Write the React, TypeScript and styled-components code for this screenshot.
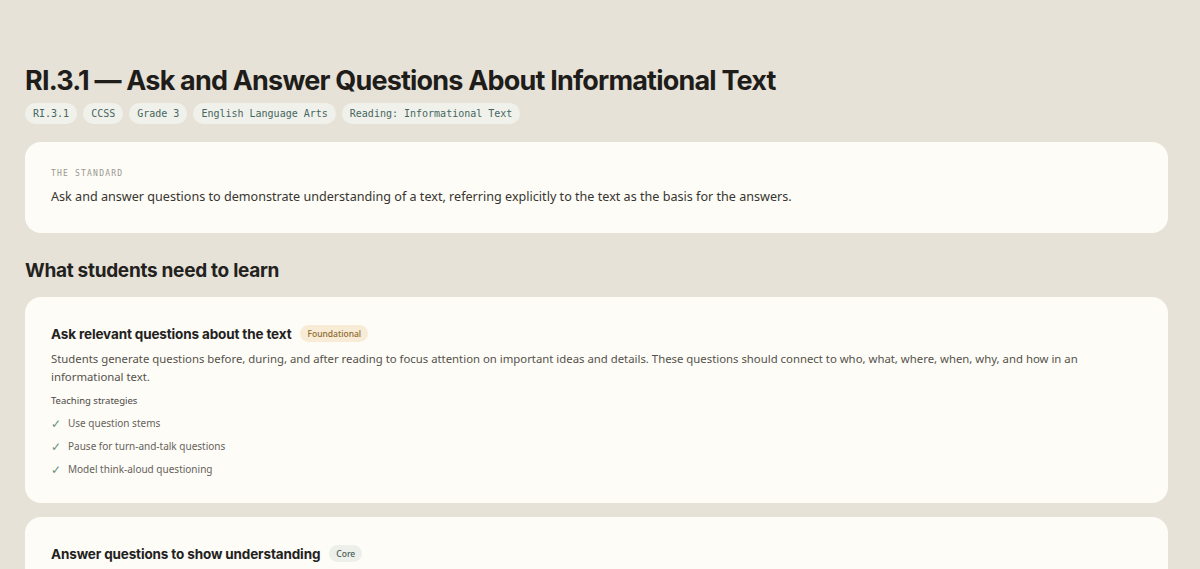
import React from 'react';
import styled, { createGlobalStyle } from 'styled-components';

const GlobalStyle = createGlobalStyle`
    html, body {
        margin: 0;
        padding: 0;
        background: #e6e2d8;
    }
    body {
        font-family: 'Noto Sans', 'Open Sans', sans-serif;
        color: #2a2824;
    }
    ::-webkit-scrollbar {
        width: 8px;
    }
    ::-webkit-scrollbar-track {
        background: #e6e2d8;
    }
    ::-webkit-scrollbar-thumb {
        background: #c4c1ba;
        border-radius: 4px;
    }
`;

type Level = 'foundational' | 'core' | 'advanced';

type Skill = {
    title: string;
    level: Level;
    levelLabel: string;
    description: string;
    strategies: string[];
};

const skills: Skill[] = [
    {
        title: 'Ask relevant questions about the text',
        level: 'foundational',
        levelLabel: 'Foundational',
        description:
            'Students generate questions before, during, and after reading to focus attention on important ideas and details. These questions should connect to who, what, where, when, why, and how in an informational text.',
        strategies: ['Use question stems', 'Pause for turn-and-talk questions', 'Model think-aloud questioning'],
    },
    {
        title: 'Answer questions to show understanding',
        level: 'core',
        levelLabel: 'Core',
        description:
            'Students respond to questions about key details and main ideas, showing that they understood what the author explained. Answers should be complete and accurate to the information in the text.',
        strategies: ['Answer in complete sentences', 'Restate the question in the answer', 'Check answers against the text'],
    },
    {
        title: 'Refer explicitly to the text as evidence',
        level: 'advanced',
        levelLabel: 'Advanced',
        description:
            'Students point to specific words, sentences, or text features that support their answers. They learn to say where in the text they found the information rather than relying on memory or opinion.',
        strategies: ['Highlight or flag evidence', 'Use sentence frames such as "The text says..."', 'Cite the page or paragraph number'],
    },
    {
        title: 'Use text features to locate answers',
        level: 'core',
        levelLabel: 'Core',
        description:
            'Students use headings, captions, bold words, and diagrams to find information quickly and to confirm their answers to questions about the text.',
        strategies: ['Text feature scavenger hunt', 'Label features on a sample page', 'Match questions to headings'],
    },
    {
        title: 'Distinguish literal and inferential questions',
        level: 'advanced',
        levelLabel: 'Advanced',
        description:
            'Students recognize the difference between questions answered directly in the text and questions that require combining details with what they already know.',
        strategies: ['Sort "right there" and "think and search" questions', 'Build a class anchor chart', 'Partner question swaps'],
    },
];

const tags = ['RI.3.1', 'CCSS', 'Grade 3', 'English Language Arts', 'Reading: Informational Text'];

const App = () => {
    return (
        <>
            <GlobalStyle />
            <Page>
                <Header>
                    <Title>RI.3.1 — Ask and Answer Questions About Informational Text</Title>
                    <TagRow>
                        {tags.map((t) => (
                            <Tag key={t}>{t}</Tag>
                        ))}
                    </TagRow>
                </Header>

                <StandardCard>
                    <Eyebrow>The standard</Eyebrow>
                    <StandardText>
                        Ask and answer questions to demonstrate understanding of a text, referring explicitly to the
                        text as the basis for the answers.
                    </StandardText>
                </StandardCard>

                <SectionTitle>What students need to learn</SectionTitle>

                <CardList>
                    {skills.map((s) => (
                        <Card key={s.title}>
                            <CardHead>
                                <CardTitle>{s.title}</CardTitle>
                                <Badge $level={s.level}>{s.levelLabel}</Badge>
                            </CardHead>
                            <Description>{s.description}</Description>
                            <SubLabel>Teaching strategies</SubLabel>
                            <Strategies>
                                {s.strategies.map((st) => (
                                    <Strategy key={st}>
                                        <Check>✓</Check>
                                        {st}
                                    </Strategy>
                                ))}
                            </Strategies>
                        </Card>
                    ))}
                </CardList>
            </Page>
        </>
    );
};

export default App;

const Page = styled.main`
    padding: 65px 32px 48px 25px;
    display: flex;
    flex-direction: column;
`;

const Header = styled.header`
    display: flex;
    flex-direction: column;
    gap: 6px;
`;

const Title = styled.h1`
    margin: 0;
    font-family: Inter, 'Noto Sans', sans-serif;
    font-weight: 700;
    font-size: 27px;
    line-height: 32px;
    letter-spacing: -0.03em;
    color: #1f1d1a;
`;

const TagRow = styled.div`
    display: flex;
    gap: 6px;
`;

const Tag = styled.span`
    display: inline-flex;
    align-items: center;
    height: 21px;
    padding: 0 8px;
    border-radius: 11px;
    background: #f0f1ea;
    color: #456662;
    font-family: 'DejaVu Sans Mono', 'Liberation Mono', monospace;
    font-size: 10px;
`;

const StandardCard = styled.section`
    margin-top: 18px;
    background: #fdfcf7;
    border-radius: 16px;
    padding: 27px 26px 26px;
`;

const Eyebrow = styled.div`
    font-family: 'DejaVu Sans Mono', 'Liberation Mono', monospace;
    font-size: 8px;
    letter-spacing: 0.15em;
    text-transform: uppercase;
    color: #9a978f;
`;

const StandardText = styled.p`
    margin: 9px 0 0;
    font-size: 12.6px;
    line-height: 20px;
    color: #38352f;
`;

const SectionTitle = styled.h2`
    margin: 26px 0 14px;
    font-family: Inter, 'Noto Sans', sans-serif;
    font-weight: 700;
    font-size: 19px;
    line-height: 24px;
    letter-spacing: -0.015em;
    color: #23211d;
`;

const CardList = styled.div`
    display: flex;
    flex-direction: column;
    gap: 14px;
`;

const Card = styled.article`
    background: #fdfcf7;
    border-radius: 16px;
    padding: 28px 26px 25px;
`;

const CardHead = styled.div`
    display: flex;
    align-items: center;
    gap: 9px;
`;

const CardTitle = styled.h3`
    margin: 0;
    font-family: Inter, 'Noto Sans', sans-serif;
    font-weight: 700;
    font-size: 13.5px;
    letter-spacing: -0.01em;
    color: #23211d;
`;

const badgeColors: Record<Level, { bg: string; fg: string }> = {
    foundational: { bg: '#f8ecd6', fg: '#8c6a2e' },
    core: { bg: '#edf0ea', fg: '#4a5a55' },
    advanced: { bg: '#ece8f4', fg: '#5d4f84' },
};

const Badge = styled.span<{ $level: Level }>`
    display: inline-flex;
    align-items: center;
    height: 17px;
    padding: 0 7px;
    border-radius: 9px;
    font-size: 8.5px;
    font-weight: 500;
    background: ${(p) => badgeColors[p.$level].bg};
    color: ${(p) => badgeColors[p.$level].fg};
`;

const Description = styled.p`
    margin: 8px 0 0;
    font-size: 11.35px;
    line-height: 18px;
    color: #55524b;
`;

const SubLabel = styled.div`
    margin-top: 8px;
    font-size: 9.5px;
    font-weight: 400;
    color: #4a4741;
`;

const Strategies = styled.ul`
    list-style: none;
    margin: 8px 0 0;
    padding: 0;
    display: flex;
    flex-direction: column;
    gap: 6px;
`;

const Strategy = styled.li`
    display: flex;
    align-items: center;
    gap: 7px;
    font-size: 10px;
    line-height: 17px;
    color: #66625a;
`;

const Check = styled.span`
    color: #6a937a;
    font-size: 12px;
    font-weight: 300;
    line-height: 17px;
`;
